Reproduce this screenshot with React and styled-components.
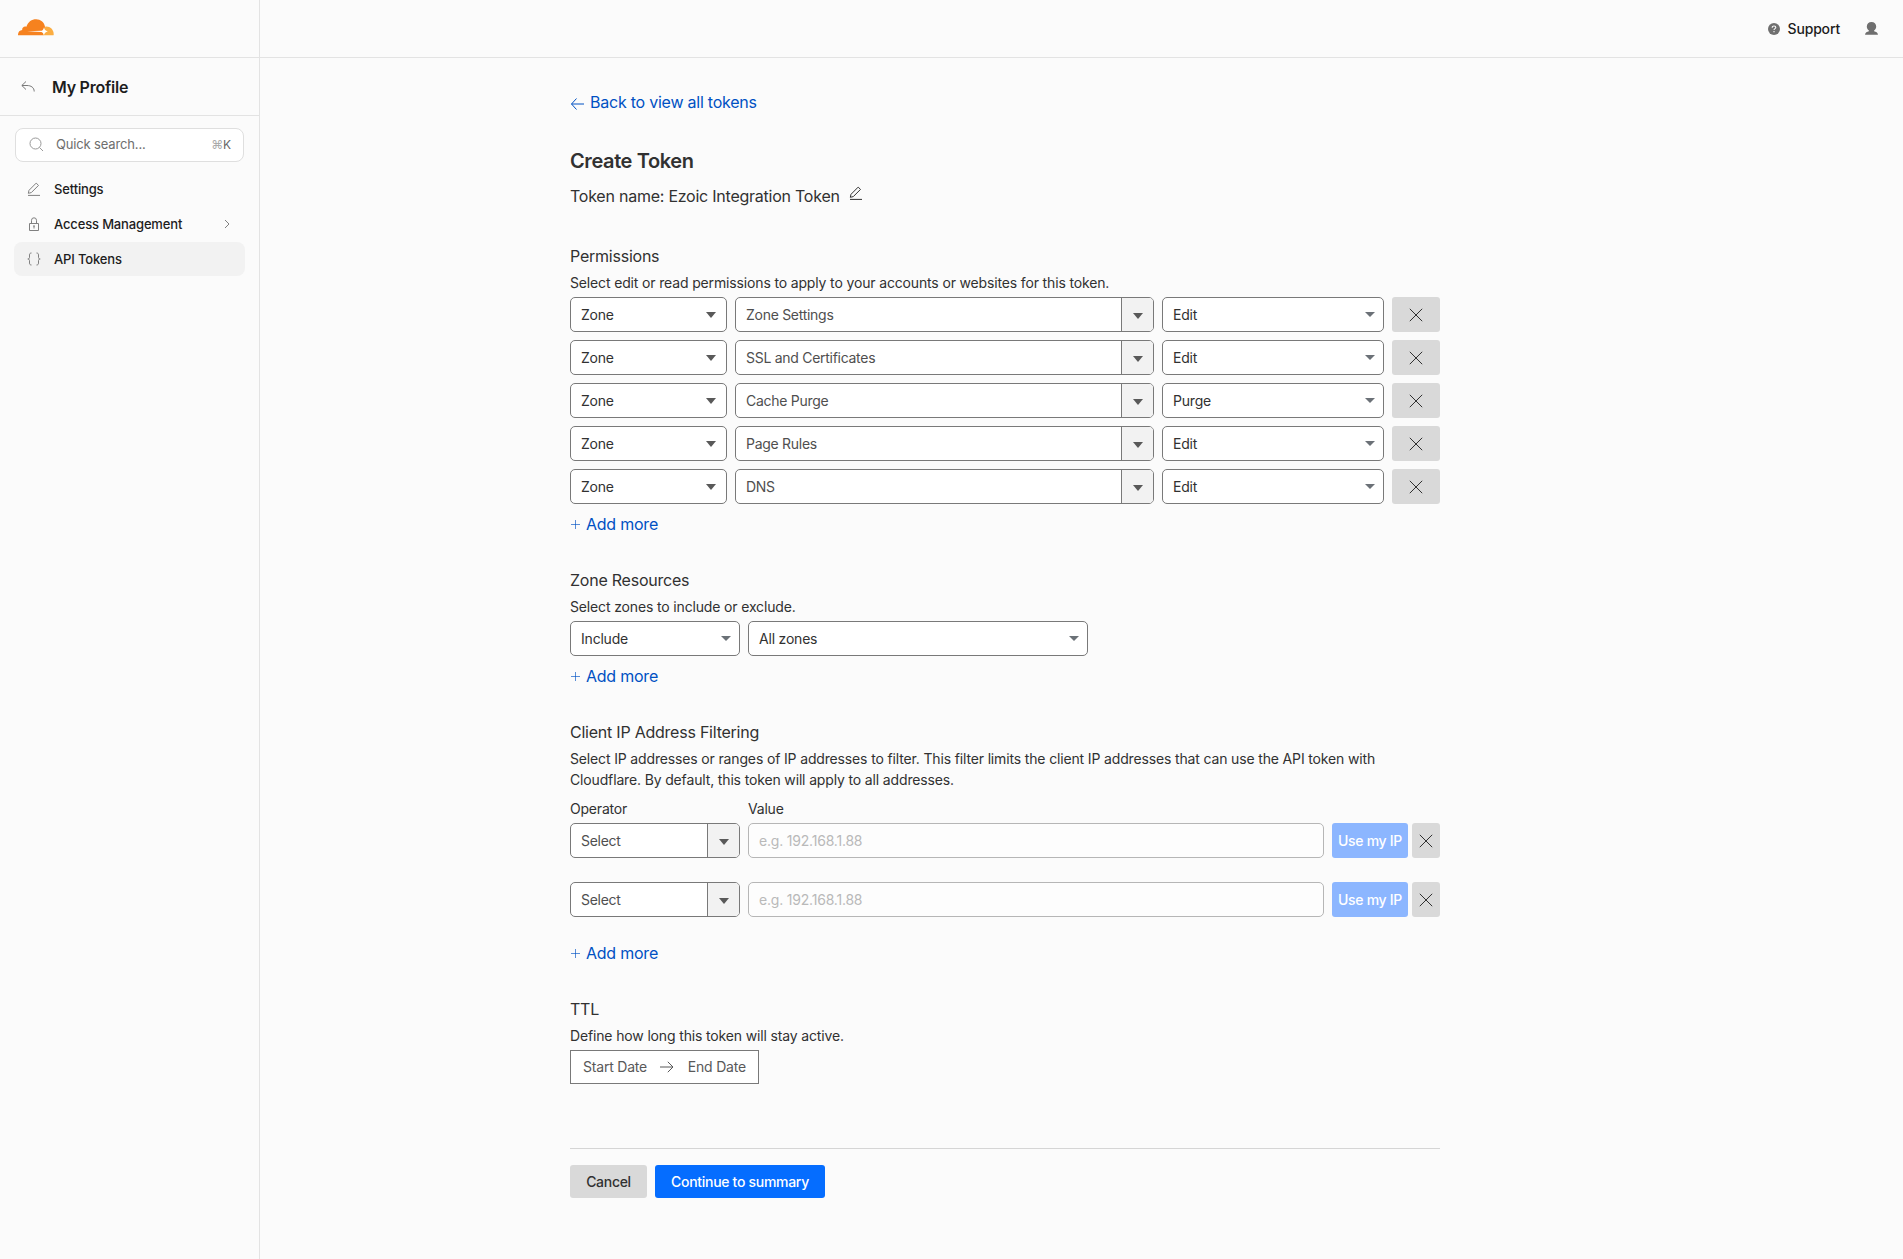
import styled, { createGlobalStyle } from 'styled-components';

const GlobalStyle = createGlobalStyle`
  * {
    box-sizing: border-box;
  }

  body {
    margin: 0;
    background-color: #fbfbfb;
    color: #313131;
    font-family: Inter, 'Liberation Sans', sans-serif;
    font-size: 14px;
    line-height: 21px;
  }

  svg {
    display: block;
    flex-shrink: 0;
  }

  button,
  input {
    font-family: inherit;
  }
`;

const Page = styled.div`
  display: flex;
  min-height: 100vh;
`;

const Sidebar = styled.aside`
  width: 260px;
  flex-shrink: 0;
  border-right: 1px solid #e3e3e3;
  letter-spacing: -0.011em;
`;

const LogoBar = styled.div`
  display: flex;
  align-items: center;
  height: 58px;
  padding: 0 0 3px 18px;
  border-bottom: 1px solid #e3e3e3;
`;

const ProfileBar = styled.div`
  display: flex;
  align-items: center;
  gap: 17px;
  height: 58px;
  padding: 1px 0 0 21px;
  border-bottom: 1px solid #e3e3e3;
  color: #797979;
`;

const ProfileTitle = styled.h1`
  margin: 0;
  color: #1d1d1d;
  font-size: 16px;
  font-weight: 600;
  letter-spacing: -0.015em;
`;

const Search = styled.div`
  display: flex;
  align-items: center;
  height: 34px;
  margin: 12px 15px 10px;
  padding: 0 12px 1px 13px;
  border: 1px solid #dfdfdf;
  border-radius: 8px;
  background-color: #fff;
  color: #999;
`;

const SearchText = styled.span`
  flex: 1;
  margin-left: 12px;
  color: #6e6e6e;
  font-size: 13px;
`;

const Shortcut = styled.span`
  color: #666;
  font-size: 12px;

  > span {
    color: #aaa;
  }
`;

const Nav = styled.nav`
  display: flex;
  flex-direction: column;
  gap: 1px;
  padding: 0 14px;
`;

const NavItem = styled.a`
  display: flex;
  align-items: center;
  gap: 13px;
  height: 34px;
  padding: 0 14px 0 13px;
  border-radius: 8px;
  background-color: ${({ $active }) => ($active ? '#f2f2f2' : 'transparent')};
  color: #808080;
`;

const NavLabel = styled.span`
  flex: 1;
  color: #1d1d1d;
  font-size: 13px;
  font-weight: 500;
`;

const Main = styled.main`
  flex: 1;
`;

const TopBar = styled.header`
  display: flex;
  justify-content: flex-end;
  align-items: center;
  height: 58px;
  padding-right: 25px;
  border-bottom: 1px solid #e3e3e3;
  color: #6f6f6f;
`;

const Support = styled.a`
  margin: 0 25px 0 8px;
  color: #1d1d1d;
  font-size: 14px;
  font-weight: 500;
  letter-spacing: -0.012em;
`;

const Content = styled.div`
  width: 870px;
  margin-left: 310px;
  padding-top: 32px;
  letter-spacing: -0.0145em;
`;

const BackLink = styled.a`
  display: flex;
  align-items: center;
  gap: 6px;
  color: #0051c3;
  font-size: 16px;
  letter-spacing: -0.0145em;
  line-height: 24px;
`;

const Title = styled.h2`
  margin: 32px 0 8px;
  font-size: 20px;
  font-weight: 600;
  letter-spacing: -0.02em;
  line-height: 30px;
`;

const TokenName = styled.div`
  display: flex;
  gap: 9px;
  margin-bottom: 36px;
  font-size: 16px;
  letter-spacing: -0.015em;
  line-height: 24px;

  > svg {
    margin-top: 2px;
  }
`;

const Section = styled.section`
  margin-bottom: 32px;
`;

const SectionTitle = styled.h3`
  margin: 0 0 4px;
  font-size: 16px;
  font-weight: 400;
  letter-spacing: -0.0145em;
  line-height: 24px;
`;

const Description = styled.p`
  margin: 0 0 4px;
  letter-spacing: -0.0107em;
`;

const Rows = styled.div`
  display: flex;
  flex-direction: column;
  gap: ${({ $gap }) => $gap || 8}px;
  margin-bottom: ${({ $gap }) => $gap || 8}px;
`;

const Row = styled.div`
  display: flex;
  gap: 8px;
`;

const Labels = styled(Row)`
  margin: 8px 0 4px;
`;

const Label = styled.div`
  width: ${({ $width }) => $width}px;
`;

const Box = styled.div`
  display: flex;
  justify-content: space-between;
  align-items: center;
  width: ${({ $width }) => $width}px;
  height: 35px;
  padding: 0 ${({ $arrowInset }) => $arrowInset || 8}px 0 10px;
  border: 1px solid #797979;
  border-radius: 5px;
  background-color: #fff;
`;

const ComboBox = styled.div`
  display: flex;
  width: ${({ $width }) => $width}px;
  height: 35px;
  overflow: hidden;
  border: 1px solid #797979;
  border-radius: 5px;
  background-color: #fff;
  color: #4f4f4f;
  letter-spacing: -0.02em;
`;

const ComboValue = styled.div`
  flex: 1;
  padding: 6px 10px;
`;

const ComboToggle = styled.div`
  display: flex;
  justify-content: center;
  align-items: center;
  width: 32px;
  padding-top: 2px;
  border-left: 1px solid #797979;
  background-color: #f2f2f2;
`;

const ValueInput = styled.input`
  width: 576px;
  height: 35px;
  padding: 0 10px;
  border: 1px solid #b6b6b6;
  border-radius: 5px;
  background-color: #fdfdfd;
  font-size: 14px;
  letter-spacing: -0.0145em;

  &::placeholder {
    color: #b9b9b9;
    opacity: 1;
  }
`;

const RemoveButton = styled.button`
  display: flex;
  justify-content: center;
  align-items: center;
  width: ${({ $width }) => $width}px;
  height: 35px;
  padding: 0;
  border: none;
  border-radius: 3px;
  background-color: #d9d9d9;
  color: #1d1d1d;
`;

const IpActions = styled.div`
  display: flex;
  gap: 4px;
`;

const UseIpButton = styled.button`
  width: 76px;
  height: 35px;
  padding: 0 0 1px;
  border: none;
  border-radius: 3px;
  background-color: #8cb6ff;
  color: #fff;
  font-size: 14px;
  font-weight: 500;
  letter-spacing: -0.022em;
  white-space: nowrap;
`;

const AddMore = styled.a`
  display: flex;
  align-items: center;
  gap: 5px;
  color: #0051c3;
  font-size: 16px;
  letter-spacing: -0.0145em;
  line-height: 24px;
`;

const DateRange = styled.div`
  display: flex;
  justify-content: space-between;
  align-items: center;
  width: 189px;
  height: 34px;
  padding: 0 12px 1px;
  border: 1px solid #797979;
  background-color: #fff;
  color: #595959;
`;

const Footer = styled.footer`
  display: flex;
  gap: 8px;
  margin-top: 64px;
  padding-top: 16px;
  border-top: 1px solid #d5d5d5;
`;

const FooterButton = styled.button`
  width: ${({ $width }) => $width}px;
  height: 33px;
  padding: 0 0 1px;
  border: none;
  border-radius: 3px;
  background-color: ${({ $primary }) => ($primary ? '#056dff' : '#d9d9d9')};
  color: ${({ $primary }) => ($primary ? '#fff' : '#313131')};
  font-size: 14px;
  font-weight: 500;
  letter-spacing: -0.021em;
`;

const Logo = () => (
  <svg width='36' height='17' viewBox='0 0 36 17'>
    <path
      d='M0 16.3c-.2-2.8 1.5-5 4.2-5.2-.3-2.4 1.8-4.2 4.2-3.3C10 2.7 13.8.3 18.1.3c4.4 0 8 2.900 8.900 7.400L25.300 16.300z'
      fill='#f6821f'
    />
    <path
      d='M27.200 7.700c4.500-.7 8.300 2.600 8.500 7.200 0 .5 0 1-.2 1.400H25z'
      fill='#fbad41'
    />
    <path
      d='M9 12.200l14.800-.5c1.200-.5 1.600-1.300 2.100-3.200.6 2.200 1.500 3.100 3.900 3.900-2.400.7-3.200 1.600-3.800 3.700-.7-1.900-1.300-2.700-2.600-3.200z'
      fill='#fff'
    />
  </svg>
);

const StrokeIcon = ({ width = 14, height = 14, stroke = 1, children, ...rest }) => (
  <svg
    width={width}
    height={height}
    viewBox={`0 0 ${width} ${height}`}
    fill='none'
    stroke='currentColor'
    strokeWidth={stroke}
    {...rest}
  >
    {children}
  </svg>
);

const ReturnIcon = () => (
  <StrokeIcon width={14} height={12}>
    <path d='M5 .5L.8 4.500l4.200 4M1 4.500h5c4 0 7.200 2 7.200 6' />
  </StrokeIcon>
);

const SearchIcon = () => (
  <StrokeIcon width={15} height={15}>
    <circle cx='6.500' cy='6.500' r='5.500' />
    <path d='M10.500 10.500L14 14' />
  </StrokeIcon>
);

const PencilIcon = () => (
  <StrokeIcon>
    <path d='M2 8.300L9.200 1.100l2.300 2.300L4.300 10.600l-3 .7zM1 13.400h12' />
  </StrokeIcon>
);

const LockIcon = () => (
  <StrokeIcon>
    <path d='M2.500 6.500h9v7h-9zM4.500 6.500V3.300a2.500 2.500 0 0 1 5 0v3.200' />
    <path d='M6 9h2M7 9v2.500' />
  </StrokeIcon>
);

const BracesIcon = () => (
  <StrokeIcon>
    <path d='M4.500 1C3 1 2.500 1.700 2.500 3v2.300C2.500 6.400 2 7 .8 7 2 7 2.500 7.600 2.500 8.700V11c0 1.300.5 2 2 2M9.500 1c1.500 0 2 .7 2 2v2.300c0 1.100.5 1.700 1.700 1.700-1.200 0-1.700.6-1.700 1.700V11c0 1.300-.5 2-2 2' />
  </StrokeIcon>
);

const ChevronIcon = () => (
  <StrokeIcon width={8} height={10}>
    <path d='M2 1l4 4-4 4' />
  </StrokeIcon>
);

const HelpIcon = () => (
  <svg width='12' height='12' viewBox='0 0 12 12'>
    <circle cx='6' cy='6' r='6' fill='currentColor' />
    <path
      d='M4.200 4.700C4.200 3.600 5 3 6 3s1.800.6 1.800 1.500C7.800 5.600 6 5.700 6 7M6 8v1.200'
      fill='none'
      stroke='#fbfbfb'
      strokeWidth='1.100'
    />
  </svg>
);

const UserIcon = () => (
  <svg width='13' height='13' viewBox='0 0 13 13' fill='currentColor'>
    <path d='M6.500 0C9.300 0 11.200 1.900 11.200 4.500c0 1.700-.8 3.100-2.100 4v.8c1.900.4 3.600 1.300 3.900 3.500H0c.3-2.200 2-3.100 3.900-3.500v-.8c-1.300-.9-2.100-2.300-2.100-4C1.800 1.900 3.700 0 6.500 0z' />
  </svg>
);

const BackArrow = () => (
  <StrokeIcon style={{ marginTop: 3 }}>
    <path d='M6.500 1.500L1.500 7l5 5.500M1.500 7H14' />
  </StrokeIcon>
);

const RangeArrow = () => (
  <StrokeIcon>
    <path d='M7.800 1.800L13 7l-5.200 5.200M13 7H0' />
  </StrokeIcon>
);

const CloseIcon = () => (
  <StrokeIcon width={14} height={14} stroke={0.9}>
    <path d='M.8.800l12.400 12.400M13.200.800L.8 13.200' />
  </StrokeIcon>
);

const PlusIcon = () => (
  <StrokeIcon width={11} height={11}>
    <path d='M5.500 1v9M1 5.500h9' opacity='0.650' />
  </StrokeIcon>
);

const Caret = ({ height = 6, color = '#595959' }) => (
  <svg width='10' height={height} viewBox='0 0 10 6' preserveAspectRatio='none'>
    <path d='M0 0h10L5 6z' fill={color} />
  </svg>
);

const Select = ({ width, children }) => (
  <Box $width={width}>
    {children}
    <Caret height={5} color='#6b7177' />
  </Box>
);

const Combo = ({ width, children }) => (
  <ComboBox $width={width}>
    <ComboValue>{children}</ComboValue>
    <ComboToggle>
      <Caret />
    </ComboToggle>
  </ComboBox>
);

const AddMoreLink = () => (
  <AddMore>
    <PlusIcon />
    Add more
  </AddMore>
);

const navItems = [
  { label: 'Settings', icon: <PencilIcon /> },
  { label: 'Access Management', icon: <LockIcon />, expandable: true },
  { label: 'API Tokens', icon: <BracesIcon />, active: true },
];

const permissions = [
  { name: 'Zone Settings', access: 'Edit' },
  { name: 'SSL and Certificates', access: 'Edit' },
  { name: 'Cache Purge', access: 'Purge' },
  { name: 'Page Rules', access: 'Edit' },
  { name: 'DNS', access: 'Edit' },
];

const ipFilters = [1, 2];

const App = () => (
  <Page>
    <GlobalStyle />
    <Sidebar>
      <LogoBar>
        <Logo />
      </LogoBar>
      <ProfileBar>
        <ReturnIcon />
        <ProfileTitle>My Profile</ProfileTitle>
      </ProfileBar>
      <Search>
        <SearchIcon />
        <SearchText>Quick search...</SearchText>
        <Shortcut>
          <span>⌘</span>K
        </Shortcut>
      </Search>
      <Nav>
        {navItems.map(({ label, icon, expandable, active }) => (
          <NavItem key={label} $active={active}>
            {icon}
            <NavLabel>{label}</NavLabel>
            {expandable && <ChevronIcon />}
          </NavItem>
        ))}
      </Nav>
    </Sidebar>
    <Main>
      <TopBar>
        <HelpIcon />
        <Support>Support</Support>
        <UserIcon />
      </TopBar>
      <Content>
        <BackLink>
          <BackArrow />
          Back to view all tokens
        </BackLink>
        <Title>Create Token</Title>
        <TokenName>
          Token name: Ezoic Integration Token
          <PencilIcon />
        </TokenName>

        <Section>
          <SectionTitle>Permissions</SectionTitle>
          <Description>
            Select edit or read permissions to apply to your accounts or
            websites for this token.
          </Description>
          <Rows>
            {permissions.map(({ name, access }) => (
              <Row key={name}>
                <Box $width={157} $arrowInset={10}>
                  Zone
                  <Caret />
                </Box>
                <Combo width={419}>{name}</Combo>
                <Select width={222}>{access}</Select>
                <RemoveButton $width={48}>
                  <CloseIcon />
                </RemoveButton>
              </Row>
            ))}
          </Rows>
          <AddMoreLink />
        </Section>

        <Section>
          <SectionTitle>Zone Resources</SectionTitle>
          <Description>Select zones to include or exclude.</Description>
          <Rows>
            <Row>
              <Select width={170}>Include</Select>
              <Select width={340}>All zones</Select>
            </Row>
          </Rows>
          <AddMoreLink />
        </Section>

        <Section>
          <SectionTitle>Client IP Address Filtering</SectionTitle>
          <Description>
            Select IP addresses or ranges of IP addresses to filter. This filter
            limits the client IP addresses that can use the API token with
            <br />
            Cloudflare. By default, this token will apply to all addresses.
          </Description>
          <Labels>
            <Label $width={170}>Operator</Label>
            <Label>Value</Label>
          </Labels>
          <Rows $gap={24}>
            {ipFilters.map((id) => (
              <Row key={id}>
                <Combo width={170}>Select</Combo>
                <ValueInput placeholder='e.g. 192.168.1.88' disabled />
                <IpActions>
                  <UseIpButton>Use my IP</UseIpButton>
                  <RemoveButton $width={28}>
                    <CloseIcon />
                  </RemoveButton>
                </IpActions>
              </Row>
            ))}
          </Rows>
          <AddMoreLink />
        </Section>

        <Section>
          <SectionTitle>TTL</SectionTitle>
          <Description>
            Define how long this token will stay active.
          </Description>
          <DateRange>
            Start Date
            <RangeArrow />
            End Date
          </DateRange>
        </Section>

        <Footer>
          <FooterButton $width={77}>Cancel</FooterButton>
          <FooterButton $width={170} $primary>
            Continue to summary
          </FooterButton>
        </Footer>
      </Content>
    </Main>
  </Page>
);

export default App;
